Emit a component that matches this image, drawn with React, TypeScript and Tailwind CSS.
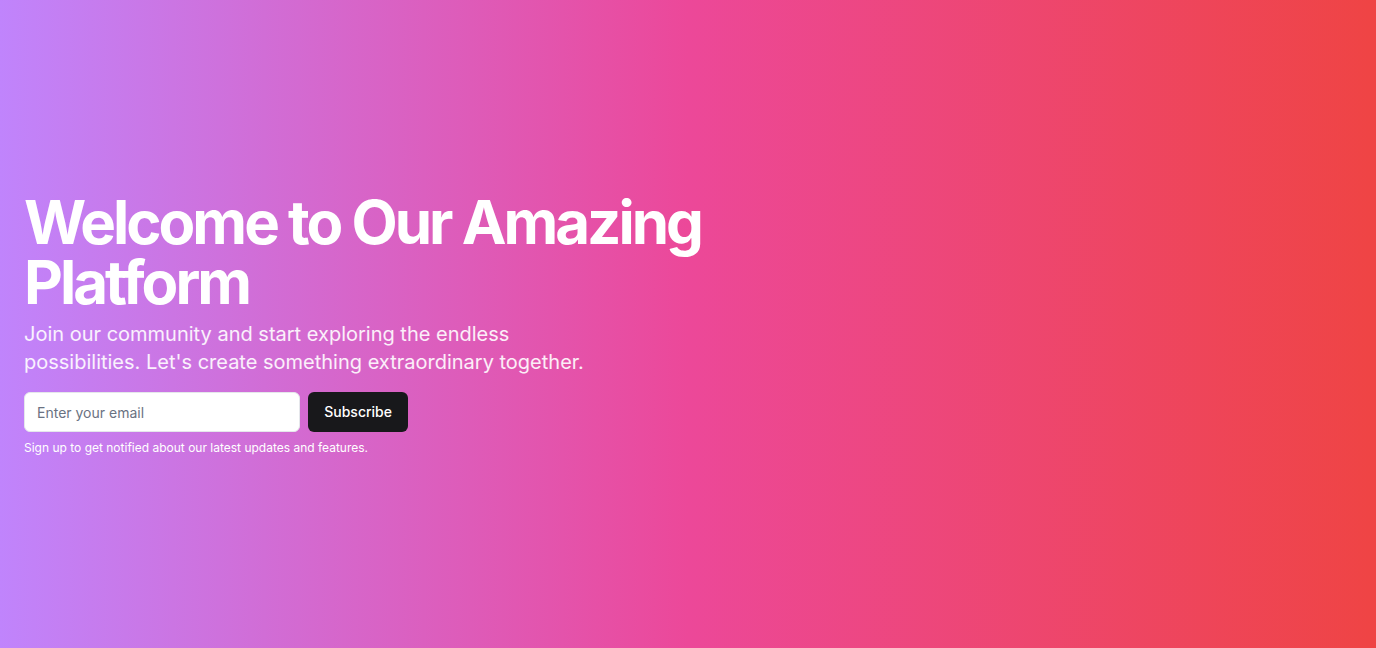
import React from 'react';

const App: React.FC = () => {
  return (
    <section
      className="w-full h-screen flex items-center bg-[linear-gradient(to_right,#c084fc,#ec4899,#ef4444)]"
      style={{ fontFamily: 'Inter, "Noto Sans", sans-serif' }}
    >
      <div className="w-full px-6">
        <div className="flex flex-col justify-center space-y-4">
          <div className="space-y-2">
            <h1 className="text-6xl/none font-bold tracking-tighter text-white">
              Welcome to Our Amazing
              <br />
              Platform
            </h1>
            <p className="max-w-[600px] text-xl text-white/90">
              Join our community and start exploring the endless possibilities. Let's create something extraordinary together.
            </p>
          </div>
          <div className="w-full max-w-sm space-y-2">
            <form className="flex gap-2" onSubmit={(e) => e.preventDefault()}>
              <input
                type="email"
                placeholder="Enter your email"
                className="flex-1 h-10 min-w-0 rounded-md border border-gray-200 bg-white px-3 text-sm text-gray-900 placeholder:text-gray-500 outline-none"
              />
              <button
                type="submit"
                className="h-10 rounded-md bg-zinc-900 px-4 text-sm font-medium text-white"
              >
                Subscribe
              </button>
            </form>
            <p className="text-xs text-white">
              Sign up to get notified about our latest updates and features.
            </p>
          </div>
        </div>
      </div>
    </section>
  );
};

export default App;
